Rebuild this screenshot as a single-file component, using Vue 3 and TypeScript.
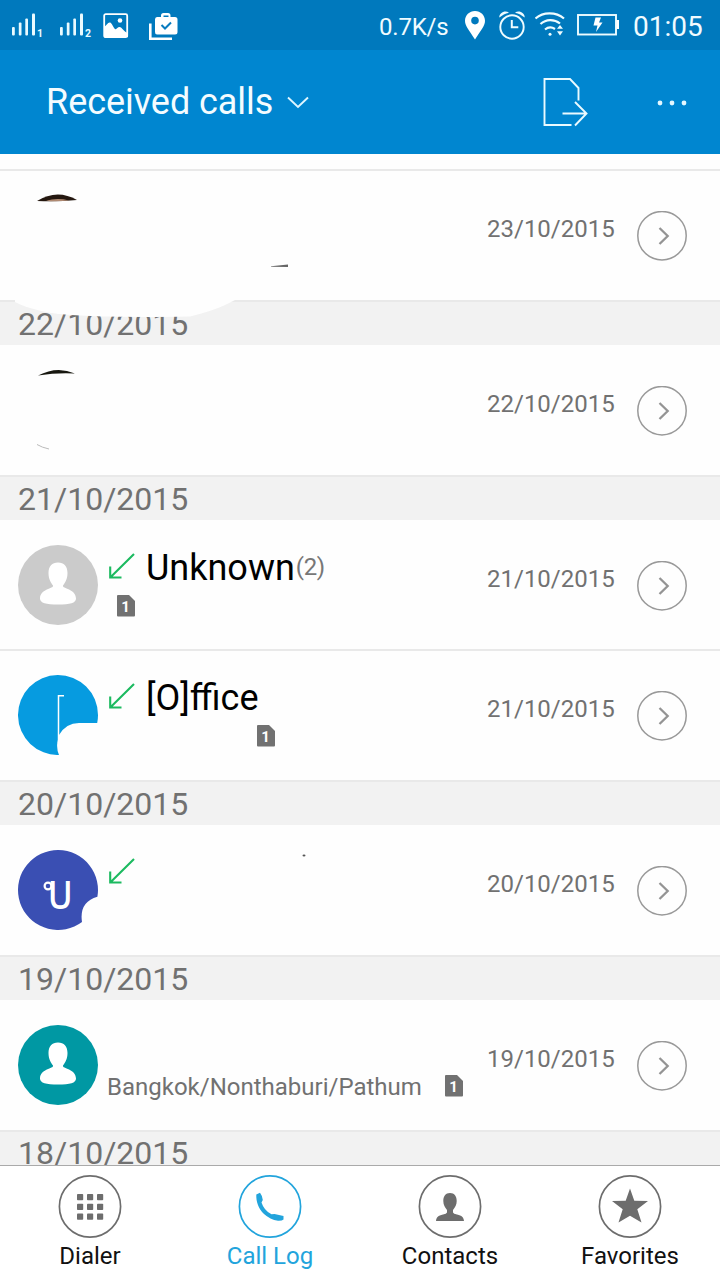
<script setup lang="ts">
interface Section { kind: 'section'; label: string }
interface Call {
  kind: 'call'
  date: string
  divider?: boolean
  avatar?: 'grey' | 'teal' | 'office' | 'thai'
  mask?: 'large' | 'small' | 'dot'
  incoming?: boolean
  name?: string
  count?: number
  location?: string
  sim?: number
  detailWidth?: number
}
type Item = Section | Call

const items: Item[] = [
  { kind: 'call', date: '23/10/2015', divider: true, mask: 'large' },
  { kind: 'section', label: '22/10/2015' },
  { kind: 'call', date: '22/10/2015', mask: 'small' },
  { kind: 'section', label: '21/10/2015' },
  { kind: 'call', date: '21/10/2015', avatar: 'grey', incoming: true, name: 'Unknown', count: 2, sim: 1, detailWidth: 10 },
  { kind: 'call', date: '21/10/2015', divider: true, avatar: 'office', incoming: true, name: '[O]ffice', sim: 1, detailWidth: 150 },
  { kind: 'section', label: '20/10/2015' },
  { kind: 'call', date: '20/10/2015', avatar: 'thai', mask: 'dot', incoming: true },
  { kind: 'section', label: '19/10/2015' },
  { kind: 'call', date: '19/10/2015', avatar: 'teal', location: 'Bangkok/Nonthaburi/Pathum', sim: 1, detailWidth: 338 },
  { kind: 'section', label: '18/10/2015' },
]

const keypad = [0, 1, 2, 3, 4, 5, 6, 7, 8].map((i) => ({ x: 19 + (i % 3) * 10, y: 19 + Math.floor(i / 3) * 9.8 }))
const tabs = [
  { id: 'dialer', label: 'Dialer' },
  { id: 'log', label: 'Call Log' },
  { id: 'contacts', label: 'Contacts' },
  { id: 'favorites', label: 'Favorites' },
]
</script>

<template>
  <div class="phone">
    <div class="status">
      <svg v-for="n in 2" :key="n" class="signal" width="34" height="28" viewBox="0 0 34 28">
        <g fill="#e9faff">
          <rect x="0" y="15" width="2.8" height="8.500" rx="1" />
          <rect x="6.800" y="10.500" width="2.700" height="13" rx="1" />
          <rect x="13.300" y="6.500" width="2.700" height="17" rx="1" />
          <rect x="20" y="1.500" width="3" height="22" rx="1" />
        </g>
        <text x="25" y="24.500" class="signal-num">{{ n }}</text>
      </svg>
      <svg class="picture" width="26" height="26" viewBox="0 0 26 26">
        <rect x="1.2" y="1.2" width="23" height="23" rx="1.500" fill="none" stroke="#fff" stroke-width="1.800" />
        <path d="M1 14C3 13 5 9 7 9.500C9 10 10 14 12 16C13.500 17 14.500 14 16.500 14C19 14 21 19 25 20V24H1Z" fill="#fff" />
        <circle cx="17" cy="7.500" r="2.300" fill="#fff" />
      </svg>
      <svg class="work" width="30" height="28" viewBox="0 0 30 28">
        <path d="M1.300 10.500V25.700H23" fill="none" stroke="#fff" stroke-width="2.600" />
        <path d="M8 4H12V2.500Q12 0 14.500 0H19Q21.500 0 21.500 2.500V4H26Q28.500 4 28.500 6.500V19Q28.500 21.500 26 21.500H8Q6 21.500 6 19V6.500Q6 4 8 4ZM14.500 2.500V4H19.500V2.500Z" fill="#fff" fill-rule="evenodd" />
        <path d="M12.500 12L16 15.500L22 9.500" fill="none" stroke="#087bbf" stroke-width="2" />
      </svg>
      <span class="rate">0.7K/s</span>
      <svg class="pin" width="20" height="29" viewBox="0 0 20 29">
        <path d="M10 0C4.400 0 0 4.300 0 9.800C0 15 4 19 10 28.500C16 19 20 15 20 9.800C20 4.300 15.600 0 10 0ZM10 5.800A3.800 3.800 0 1 1 10 13.400A3.800 3.800 0 1 1 10 5.800Z" fill="#fff" fill-rule="evenodd" />
      </svg>
      <svg class="alarm" width="26" height="29" viewBox="0 0 26 29">
        <circle cx="13" cy="16" r="11.700" fill="none" stroke="#effcff" stroke-width="1.900" />
        <path d="M12.800 9V16.300H19.300" fill="none" stroke="#effcff" stroke-width="2" />
        <path d="M.3 6.500C0 2 6 -1.500 10 1.700C6 2.800 3.500 4 .3 6.500ZM25.700 6.500C26 2 20 -1.500 16 1.700C20 2.800 22.500 4 25.700 6.500Z" fill="#effcff" />
      </svg>
      <svg class="wifi" width="32" height="26" viewBox="0 0 32 26">
        <g fill="none" stroke="#effcff" stroke-width="2.200">
          <path d="M.500 6.500C8 -.300 21 -.300 29 6.500" />
          <path d="M5.500 12C11 7 19 6.700 25 11.500" />
          <path d="M10 17.500C13 15 17 15 20 17" />
        </g>
        <circle cx="15" cy="22.200" r="1.500" fill="#effcff" />
        <path d="M22 16.800L25 13L28 16.800ZM22 19.200H28L25 23.500Z" fill="#effcff" />
      </svg>
      <svg class="battery" width="42" height="22" viewBox="0 0 42 22">
        <rect x="1" y="1" width="38" height="19.500" fill="none" stroke="#effcff" stroke-width="1.900" />
        <path d="M39.500 6H42V15H39.500Z" fill="#fff" />
        <path d="M18.500 3.500H24L22 8.500H25.500L19 18L20.500 11.500H16.500Z" fill="#fff" />
      </svg>
      <span class="clock">01:05</span>
    </div>

    <header class="header">
      <span class="title">Received calls</span>
      <svg class="caret" width="22" height="13" viewBox="0 0 22 13"><path d="M1 1.500L11 11L21 1.500" fill="none" stroke="#dff6ff" stroke-width="1.900" /></svg>
      <svg class="export" width="46" height="50" viewBox="0 0 46 50">
        <path d="M28.500 48H1.500V2H27L35.500 11V23.500M19.500 36.500H43.500M32 25L43.500 36.500L32 48.500" fill="none" stroke="#eafaff" stroke-width="1.900" />
      </svg>
      <svg class="more" width="30" height="6" viewBox="0 0 30 6"><circle v-for="x in [3, 15, 27]" :key="x" :cx="x" cy="3" r="2.400" fill="#e4f7ff" /></svg>
    </header>

    <main class="list">
      <template v-for="(item, i) in items" :key="i">
        <h2 v-if="item.kind === 'section'" class="section">{{ item.label }}</h2>
        <article v-else class="row" :class="{ divider: item.divider, short: item.name === 'Unknown' }">
          <svg class="avatar" width="80" height="80" viewBox="0 0 80 80">
            <template v-if="item.avatar === 'grey' || item.avatar === 'teal'">
              <circle cx="40" cy="40" r="40" :fill="item.avatar === 'grey' ? '#cbcbcb' : '#0098a3'" />
              <path d="M40 17.500C34 17.500 30.500 21.500 30.500 28C30.500 34 33 38 35 40.500C36 44 22 43.500 22 53.500C22 58 28 59.500 40 59.500C52 59.500 58 58 58 53.500C58 43.500 44 44 45 40.500C47 38 49.500 34 49.500 28C49.500 21.500 46 17.500 40 17.500Z" fill="#fff" />
            </template>
            <template v-else-if="item.avatar === 'office'">
              <path d="M80 40A40 40 0 1 0 41 80Q38.500 74 39.300 68L41 60Q48 48 61 48H79.200Q80 44 80 40Z" fill="#069be0" />
              <path d="M46 20.700H40.500V68" fill="none" stroke="#fff" stroke-width="1.500" />
            </template>
            <template v-else-if="item.avatar === 'thai'">
              <path d="M80 40A40 40 0 1 0 64 72Q61 52 79.400 46.700Q80 43.500 80 40Z" fill="#3a4fb3" />
              <text transform="translate(42.300 59.300) scale(.86 1)" class="letter">บ</text>
              <circle cx="30" cy="36" r="3.400" fill="none" stroke="#fff" stroke-width="2.200" />
            </template>
          </svg>
          <div class="info">
            <div class="name-line">
              <svg v-if="item.incoming" class="arrow" width="27" height="27" viewBox="0 0 27 27"><path d="M26 1L2.500 24.200M2.200 13.500V24.500H13.500" fill="none" stroke="#1cba60" stroke-width="2.100" /></svg>
              <span class="name">{{ item.name }}</span>
              <span v-if="item.count" class="count">({{ item.count }})</span>
            </div>
            <div v-if="item.sim" class="detail">
              <span class="location" :style="{ width: item.detailWidth + 'px' }">{{ item.location }}</span>
              <svg width="18" height="22" viewBox="0 0 18 22">
                <path d="M1 0H12L18 6V20.500Q18 21.500 17 21.500H1Q0 21.500 0 20.500V1Q0 0 1 0Z" fill="#717171" />
                <text x="8.600" y="17" class="sim-num">{{ item.sim }}</text>
              </svg>
            </div>
          </div>
          <time class="date">{{ item.date }}</time>
          <svg class="go" width="50" height="50" viewBox="0 0 50 50">
            <circle cx="25" cy="24.700" r="24.200" fill="none" stroke="#999" stroke-width="1.500" />
            <path d="M22.500 17L30.700 25L22.500 33" fill="none" stroke="#949494" stroke-width="2.300" />
          </svg>
          <svg v-if="item.mask" class="mask" width="720" height="150" viewBox="0 0 720 150">
            <template v-if="item.mask === 'large'">
              <path d="M15 129H235C223 136 202 143 190 145.500Q100 147 60 143C43 141 27 137 15 131Z" fill="#fefefe" />
              <path d="M37 30Q57 17.500 77 29Q57 31 37 30Z" fill="#24170f" />
              <path d="M46 29.800Q57 26.500 69 29.500Q57 31 46 29.800Z" fill="#b08a72" />
              <path d="M271 95.200L288 93.500V96L271 95.800Z" fill="#666" />
            </template>
            <template v-else-if="item.mask === 'small'">
              <path d="M38 30.500Q57 20.500 75 28.500Q57 27.500 38 30.500Z" fill="#17170f" />
              <path d="M37 99.500Q42 102.500 49 104" fill="none" stroke="#bbb" />
            </template>
            <ellipse v-else cx="304" cy="30.500" rx="1.500" ry="1" fill="#555" />
          </svg>
        </article>
      </template>
    </main>

    <nav class="tabs">
      <div v-for="tab in tabs" :key="tab.id" class="tab" :class="{ active: tab.id === 'log' }">
        <svg width="64" height="64" viewBox="0 0 64 64">
          <circle cx="32" cy="31.500" r="30.600" fill="none" stroke="currentColor" stroke-width="1.700" />
          <g v-if="tab.id === 'dialer'" fill="currentColor">
            <rect v-for="(k, i) in keypad" :key="i" :x="k.x" :y="k.y" width="6.200" height="6.200" rx=".8" />
          </g>
          <path v-else-if="tab.id === 'log'" d="M18.300 19.500L22 17.800Q24.500 21 24.800 25L23.500 27.500Q26 35.500 33.500 39.300L36.500 39L45.500 41V44.500Q44 46 40 45.800Q32 44.500 26 39C20.500 33.500 18 27 18.300 19.500Z" fill="currentColor" />
          <path v-else-if="tab.id === 'contacts'" d="M32 18C27.500 18 25.300 21.500 25.300 26C25.300 30 27 32.500 29 35V37.500Q28.500 39 25 39.500C20 40.500 18.500 42 18 46H46C45.500 42 44 40.500 39 39.500Q35.500 39 35 37.500V35C37 32.500 38.700 30 38.700 26C38.700 21.500 36.500 18 32 18Z" fill="currentColor" />
          <path v-else d="M32 13.500L36.300 25.700L50 26L39.300 34.300L43.500 47.500L32 40.700L20.500 47.500L24.700 34.300L14 26L27.700 25.700Z" fill="currentColor" />
        </svg>
        <span class="tab-label">{{ tab.label }}</span>
      </div>
    </nav>
  </div>
</template>

<style>
body { margin: 0; }
</style>
<style scoped>
.phone { width: 720px; height: 1280px; overflow: hidden; display: flex; flex-direction: column; background: #fefefe; font-family: Roboto, "Noto Sans", sans-serif; color: #000; }
.phone * { box-sizing: border-box; }
svg { display: block; flex: none; }
.status { height: 50px; flex: none; display: flex; align-items: flex-start; background: #0079bd; color: #f0fbff; white-space: nowrap; }
.signal { margin: 12px 0 0 12px; }
.signal + .signal { margin-left: 14px; }
.signal-num { font: 700 10.500px Roboto, sans-serif; fill: #e9faff; }
.picture { margin: 12.500px 0 0 9px; }
.work { margin: 12.500px 0 0 20px; }
.rate { margin-left: 200px; width: 71px; font-size: 24px; line-height: 54px; letter-spacing: -.2px; }
.pin { margin: 11px 0 0 15px; }
.alarm { margin: 11px 0 0 14px; }
.wifi { margin: 12px 0 0 10px; }
.battery { margin: 14px 0 0 10px; }
.clock { margin-left: 14px; font-size: 28px; line-height: 53px; }
.header { height: 104px; flex: none; display: flex; align-items: flex-start; background: #0086d0; color: #f4fcff; }
.title { margin-left: 46px; width: 230px; font-size: 36px; line-height: 105px; white-space: nowrap; letter-spacing: -.05px; }
.caret { margin: 46px 0 0 11px; }
.export { margin: 27px 0 0 234px; }
.more { margin: 50px 0 0 68px; }
.list { height: 1011px; flex: none; overflow: hidden; padding-top: 15px; }
.section { margin: 0; height: 45px; padding-left: 18px; border-top: 2px solid #e9e9e9; background: #f2f2f2; color: #717171; font-size: 32px; font-weight: 400; line-height: 44px; }
.section:last-child { line-height: 43px; }
.row { position: relative; height: 130px; display: flex; align-items: flex-start; padding: 25px 0 0 18px; }
.row.short { height: 129px; }
.row.divider { height: 131px; border-top: 2px solid #e9e9e9; padding-top: 24px; }
.info { width: 371px; margin-left: 9px; }
.name-line { height: 43px; display: flex; align-items: flex-start; white-space: nowrap; }
.arrow { margin: 8px 11px 0 1px; }
.name { font-size: 36px; line-height: 46px; }
.count { margin-left: 1px; font-size: 24px; line-height: 44px; letter-spacing: -.4px; color: #777; }
.detail { height: 30px; display: flex; align-items: flex-start; padding-top: 7px; }
.location { flex: none; height: 22px; font-size: 24px; line-height: 24px; color: #717171; white-space: nowrap; }
.sim-num { font: 700 15px Roboto, sans-serif; fill: #fff; text-anchor: middle; }
.date { width: 150px; margin: 20px 0 0 9px; font-size: 24px; line-height: 28px; color: #717171; }
.go { margin: 15.500px 0 0; }
.mask { position: absolute; left: 0; top: 0; z-index: 1; overflow: visible; }
.letter { font: 50px "Noto Sans Thai", "Noto Sans", sans-serif; fill: #fff; text-anchor: middle; }
.tabs { flex: 1; display: flex; border-top: 1px solid #aaa; background: #fff; }
.tab { width: 180px; display: flex; flex-direction: column; align-items: center; padding-top: 9px; color: #6d6d6d; }
.tab.active { color: #22a4dc; }
.tab-label { font-size: 24px; line-height: 35px; color: #111; }
.active .tab-label { color: #22a4dc; }
</style>
